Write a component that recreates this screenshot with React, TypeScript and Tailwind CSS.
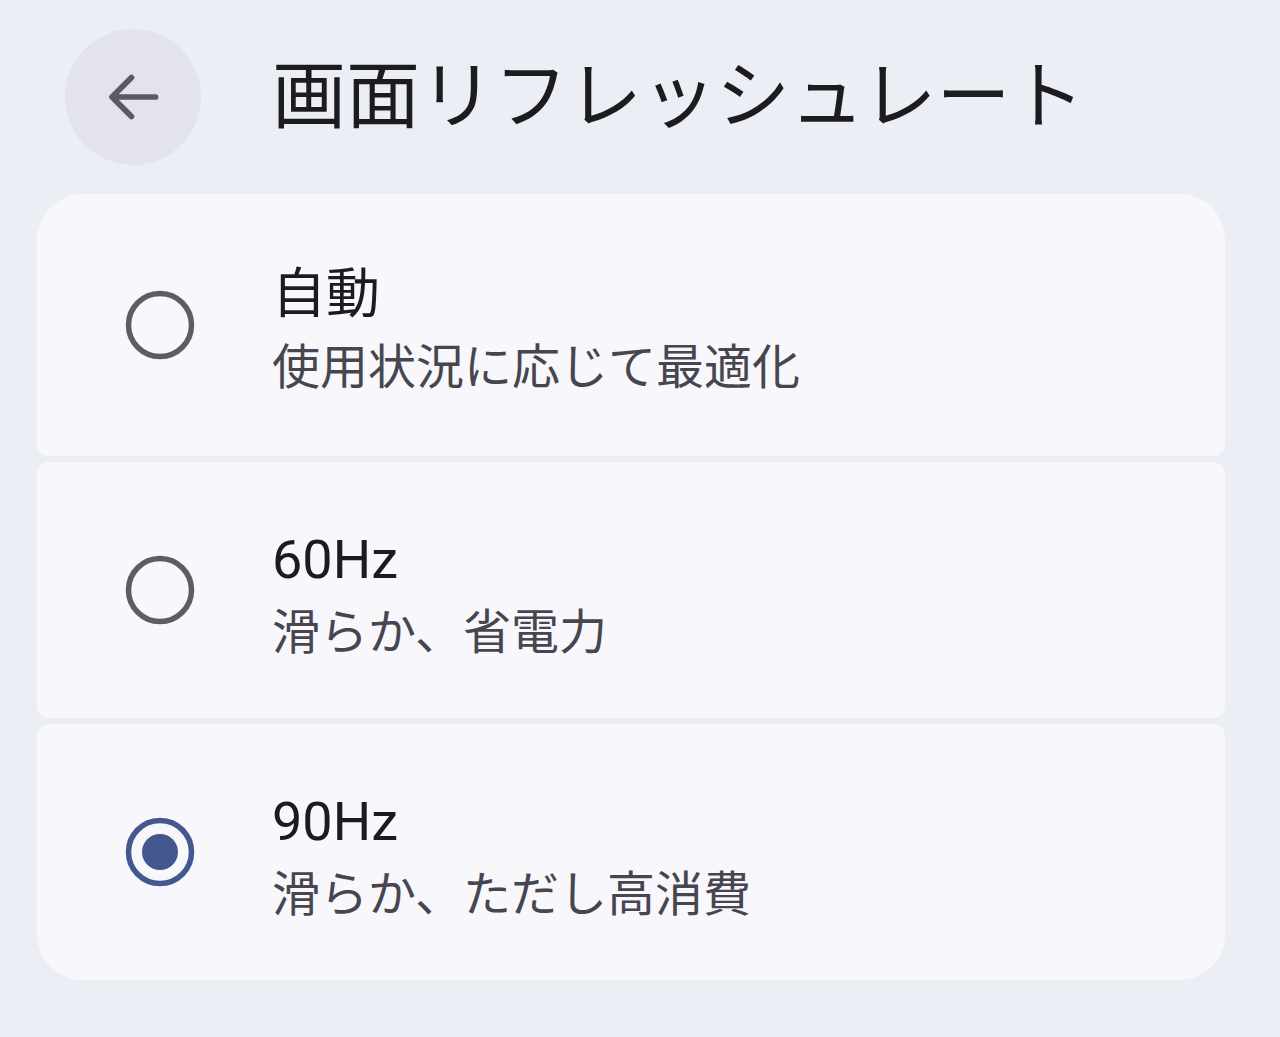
const FONT = 'font-["Roboto","Noto_Sans_CJK_JP",sans-serif]'

type Option = { title: string; subtitle: string; selected?: boolean; shape: string }

const OPTIONS: Option[] = [
  { title: '自動', subtitle: '使用状況に応じて最適化', shape: 'h-[262px] rounded-t-[46px] rounded-b-[12px]' },
  { title: '60Hz', subtitle: '滑らか、省電力', shape: 'h-[256px] rounded-[12px]' },
  { title: '90Hz', subtitle: '滑らか、ただし高消費', selected: true, shape: 'h-[256px] rounded-t-[12px] rounded-b-[46px]' },
]

function Radio({ selected }: { selected?: boolean }) {
  return (
    <svg width="72" height="72" viewBox="0 0 72 72" aria-hidden="true">
      <circle
        cx="36"
        cy="36"
        r="31.5"
        fill="none"
        stroke={selected ? '#43588f' : '#5d5e63'}
        strokeWidth="5.5"
      />
      {selected && <circle cx="36" cy="36" r="18" fill="#43588f" />}
    </svg>
  )
}

function OptionRow({ option }: { option: Option }) {
  return (
    <div className={`flex items-center bg-[#f8f7fc] pl-[87px] ${option.shape}`}>
      <Radio selected={option.selected} />
      <div className="ml-[76px] flex flex-col pt-[15px]">
        <span className="text-[54px] leading-[66px] text-[#1c1b20]">{option.title}</span>
        <span className="mt-[5px] text-[48px] leading-[70px] text-[#47464f]">{option.subtitle}</span>
      </div>
    </div>
  )
}

export default function App() {
  return (
    <div className={`min-h-[1037px] w-[1280px] bg-[#eceef6] ${FONT}`}>
      <header className="flex h-[194px] items-start pt-[29px]">
        <button className="ml-[65px] flex h-[136px] w-[136px] items-center justify-center rounded-full bg-[#e2e3ec]">
          <svg width="72" height="72" viewBox="0 0 24 24" fill="none" aria-hidden="true">
            <path
              d="M19.5 12H5.5M11.5 5.5L5 12l6.5 6.5"
              stroke="#5a5b62"
              strokeWidth="1.9"
              strokeLinecap="round"
              strokeLinejoin="round"
            />
          </svg>
        </button>
        <h1 className="ml-[71px] mt-[18px] text-[74px] font-normal leading-[100px] text-[#1c1b20]">
          画面リフレッシュレート
        </h1>
      </header>
      <div className="ml-[37px] flex w-[1188px] flex-col gap-[6px]">
        {OPTIONS.map((o) => (
          <OptionRow key={o.title} option={o} />
        ))}
      </div>
    </div>
  )
}
